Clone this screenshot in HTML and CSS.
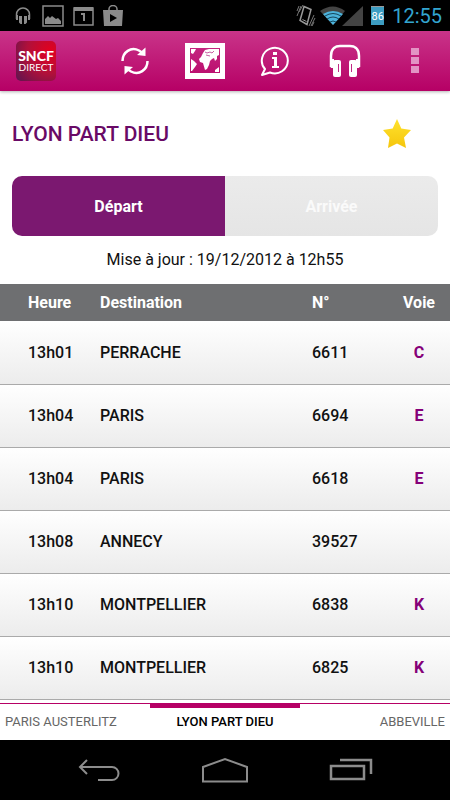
FILE: index.html
```
<!DOCTYPE html>
<html lang="fr">

<head>
    <meta charset="UTF-8">
    <meta name="viewport" content="width=device-width, initial-scale=1.0">
    <title>SNCF Direct - Lyon Part Dieu</title>
    <link rel="stylesheet" href="styles.css">
</head>

<body>
    <!-- Barre d'état -->
    <div class="status-bar">
        <div class="status-group">
            <svg class="status-headphones" width="16" height="18" viewBox="0 0 16 18">
                <path d="M1.500 12V7.500a6.500 6.500 0 0 1 13 0V12" fill="none" stroke="#8b8b8b" stroke-width="1.500"/>
                <path d="M1 8h2v5H1zM13 8h2v5h-2zM4 9h3v8H5.500L4 15.500zM9 9h3v6.500L10.500 17H9z" fill="#8b8b8b"/>
            </svg>
            <svg width="22" height="22" viewBox="0 0 22 22">
                <path d="M1 1h20v20H1z" fill="none" stroke="#8b8b8b" stroke-width="1.500"/>
                <path d="M3 19v-5l3-3 2 2 2-2 4 3 2-1 3 3v3z" fill="#8b8b8b"/>
            </svg>
            <svg width="21" height="20" viewBox="0 0 21 20">
                <path d="M1 2h19v17H1z" fill="none" stroke="#8b8b8b" stroke-width="1.500"/>
                <path d="M1 1h19v4H1zM8 7h4v8h-2V9H8z" fill="#8b8b8b"/>
            </svg>
            <svg width="20" height="22" viewBox="0 0 20 22">
                <path d="M6 6V4a4 3.500 0 0 1 8 0v2" fill="none" stroke="#8b8b8b" stroke-width="1.500"/>
                <path d="M0 5h20l-1 16H1z" fill="#8b8b8b"/>
                <path d="M7 9v8l7-4z" fill="#000"/>
            </svg>
        </div>
        <div class="status-group status-right">
            <svg width="20" height="24" viewBox="0 0 20 24">
                <path d="M8 2.500l7 3-4 15-7-4z" fill="none" stroke="#999" stroke-width="1.500"/>
                <path d="M6.500 15.500l4 2" stroke="#999"/>
                <path d="M5 2L1 12M7 1L3 8M3 2L1 7M18 11l-5 11M19 14l-4 8M18 18l-2 4" fill="none" stroke="#777"/>
            </svg>
            <svg class="wifi" width="43" height="20" viewBox="0 0 43 20">
                <path d="M0 5q13-9 25 0L13 19z" fill="#444"/>
                <path d="M3 8q10-6 20 0L13 19z" fill="#4cb3dc"/>
                <path d="M5 10q8-5 16 0M7 13q6-4 12 0M10 16q3-2 6 0" fill="none" stroke="#15465b"/>
                <path d="M43 0v20H22z" fill="#434343"/>
            </svg>
            <span class="battery">86</span>
            <span class="clock">12:55</span>
        </div>
    </div>

    <!-- Barre d'actions -->
    <header class="action-bar">
        <div class="logo"><span class="logo-name">SNCF</span><span class="logo-sub">DIRECT</span></div>
        <button class="action-btn" aria-label="Actualiser">
            <svg width="30" height="32" viewBox="0 0 30 32">
                <path d="M2.500 16C2.500 7 11 1.500 19 5.500l3 2M27.500 16c0 9-8.500 14.500-16.500 10.500l-3-2" fill="none" stroke="#fff" stroke-width="2.500"/>
                <path d="M25.500 2.500v8.500l-8.500-1zM4.500 29.500V21l8.500 1z" fill="#fff"/>
            </svg>
        </button>
        <button class="action-btn" aria-label="Carte">
            <svg width="40" height="36" viewBox="0 0 40 36">
                <path fill="#fff" fill-rule="evenodd" d="M0 0h40v36H0zM5 5v25h30V5z"/>
                <path fill="#fff" d="M6 6h5l-1 2-2 3-2-1zM6 16l3 2 3 3-2 3-3 4H6zM16 14l2-4 2-3 4-1h10v6l-2 1v3l-2 2-1-3-2 1-2 2-1 4-2 4-2 1-2-7-3-1-1-3zM30 27l4-3v5h-4z"/>
                <path d="M20 9l2 1 3-1 2 1 2-2M21 12l4 1" fill="none" stroke="#c660a2"/>
            </svg>
        </button>
        <button class="action-btn" aria-label="Informations">
            <svg width="30" height="32" viewBox="0 0 30 32">
                <path d="M5 24A13 12.800 0 1 1 10 27.500L2 30Z" fill="none" stroke="#fff" stroke-width="2" stroke-linejoin="round"/>
                <path d="M13 7h4v3h-4zM12 12h5v9h2v2h-7v-2h2v-7h-2z" fill="#fff"/>
            </svg>
        </button>
        <button class="action-btn" aria-label="Écouter">
            <svg width="34" height="34" viewBox="0 0 34 34">
                <path d="M3 23V12C3 4 8 2 12 2h10c4 0 9 2 9 10v11" fill="none" stroke="#fff" stroke-width="2.500"/>
                <rect x="5" y="16" width="8" height="17" rx="2" fill="#fff"/>
                <rect x="21" y="16" width="8" height="17" rx="2" fill="#fff"/>
                <path d="M2 15h4v9H3l-1-2zM28 15h4v7l-1 2h-3z" fill="#fff"/>
                <path d="M10.500 20v8M23.500 20v8" stroke="#c02884"/>
            </svg>
        </button>
        <button class="action-btn" aria-label="Menu">
            <svg width="8" height="26" viewBox="0 0 8 26">
                <path d="M0 0h8v7H0zM0 9h8v7H0zM0 18h8v7H0z" fill="#e294c4"/>
            </svg>
        </button>
    </header>

    <main class="content">
        <div class="station">
            <h1>LYON PART DIEU</h1>
            <button class="favorite" aria-label="Favori">
                <svg width="28" height="29" viewBox="0 0 28 29">
                    <defs>
                        <linearGradient id="gold" x1="0" y1="0" x2="0" y2="1">
                            <stop offset="0" stop-color="#ffe22e"/>
                            <stop offset="1" stop-color="#f5c60c"/>
                        </linearGradient>
                    </defs>
                    <path d="M14 0l4.300 9.500L28 11l-7 7.500L23 29l-9-4.500L5 29l1.500-10.500L0 11l9.700-1.500z" fill="url(#gold)"/>
                </svg>
            </button>
        </div>

        <div class="switch">
            <button class="switch-btn active">Départ</button>
            <button class="switch-btn">Arrivée</button>
        </div>

        <p class="updated">Mise à jour : 19/12/2012 à 12h55</p>

        <table class="board">
            <thead>
                <tr>
                    <th class="time">Heure</th>
                    <th>Destination</th>
                    <th class="number">N°</th>
                    <th class="track">Voie</th>
                </tr>
            </thead>
            <tbody>
                <tr>
                    <td class="time">13h01</td>
                    <td>PERRACHE</td>
                    <td>6611</td>
                    <td class="track">C</td>
                </tr>
                <tr>
                    <td class="time">13h04</td>
                    <td>PARIS</td>
                    <td>6694</td>
                    <td class="track">E</td>
                </tr>
                <tr>
                    <td class="time">13h04</td>
                    <td>PARIS</td>
                    <td>6618</td>
                    <td class="track">E</td>
                </tr>
                <tr>
                    <td class="time">13h08</td>
                    <td>ANNECY</td>
                    <td>39527</td>
                    <td class="track"></td>
                </tr>
                <tr>
                    <td class="time">13h10</td>
                    <td>MONTPELLIER</td>
                    <td>6838</td>
                    <td class="track">K</td>
                </tr>
                <tr>
                    <td class="time">13h10</td>
                    <td>MONTPELLIER</td>
                    <td>6825</td>
                    <td class="track">K</td>
                </tr>
            </tbody>
        </table>
    </main>

    <!-- Gares favorites -->
    <nav class="pager">
        <a href="#">PARIS AUSTERLITZ</a>
        <a href="#" class="current">LYON PART DIEU</a>
        <a href="#">ABBEVILLE</a>
    </nav>

    <!-- Boutons système -->
    <div class="system-bar">
        <button aria-label="Retour">
            <svg width="42" height="24" viewBox="0 0 42 24">
                <path d="M9 2L2 9l7 7M2 9h32a6.500 6.500 0 0 1 0 13H20" fill="none" stroke="#8c8c8c" stroke-width="2"/>
            </svg>
        </button>
        <button aria-label="Accueil">
            <svg width="46" height="26" viewBox="0 0 46 26">
                <path d="M1 24.500V10l22-8 22 8v14.500z" fill="none" stroke="#8c8c8c" stroke-width="2"/>
            </svg>
        </button>
        <button aria-label="Applications récentes">
            <svg width="44" height="24" viewBox="0 0 44 24">
                <path d="M2 8h33v13H2zM11 2h31v14" fill="none" stroke="#8c8c8c" stroke-width="2.500"/>
            </svg>
        </button>
    </div>
</body>

</html>
```
FILE: styles.css
```
:root {
    --purple: #7b1870;
    --pink: #b60065;
    --gray: #6e6f71;
}

* {
    box-sizing: border-box;
    margin: 0;
    padding: 0;
}

body {
    font-family: Roboto, "Liberation Sans", sans-serif;
    font-size: 16px;
    color: #111;
    background-color: #fff;
    min-height: 100vh;
    display: flex;
    flex-direction: column;
}

button {
    border: none;
    background: none;
    font: inherit;
    cursor: pointer;
}

svg {
    display: block;
}

/* Barre d'état */
.status-bar {
    display: flex;
    justify-content: space-between;
    align-items: center;
    height: 31px;
    padding: 0 8px 0 15px;
    background-color: #000;
}

.status-group {
    display: flex;
    align-items: center;
    gap: 9px;
}

.status-headphones {
    margin-right: 2px;
}

.status-right {
    gap: 8px;
}

.wifi {
    margin-left: -4px;
}

.battery {
    width: 13px;
    height: 19px;
    border-top: 1px solid #999;
    background-color: #3d9dc2;
    color: #fff;
    font-size: 11px;
    line-height: 19px;
    text-align: center;
}

.clock {
    color: #33a5d0;
    font-size: 20px;
    line-height: 30px;
}

/* Barre d'actions */
.action-bar {
    display: flex;
    align-items: center;
    height: 60px;
    padding-left: 16px;
    background: linear-gradient(#c93489, var(--pink));
    box-shadow: 0 1px 3px rgba(0, 0, 0, 0.3);
}

.logo {
    display: flex;
    flex-direction: column;
    align-items: center;
    justify-content: center;
    width: 40px;
    height: 40px;
    margin-right: auto;
    border-radius: 5px;
    background: radial-gradient(circle at 85% 25%, #e3001f, #b1103a 50%, #5a1550);
    color: #fff;
    font-family: Lato, sans-serif;
}

.logo-name {
    font-size: 14px;
    font-weight: 900;
    line-height: 13px;
}

.logo-sub {
    font-size: 10px;
    line-height: 11px;
}

.action-btn {
    display: flex;
    align-items: center;
    justify-content: center;
    width: 70px;
    height: 60px;
}

/* Gare */
.content {
    flex-grow: 1;
}

.station {
    display: flex;
    align-items: center;
    justify-content: space-between;
    height: 85px;
    padding: 0 39px 0 12px;
}

.station h1 {
    color: #690a66;
    font-size: 21px;
    font-weight: 500;
}

.switch {
    display: flex;
    height: 60px;
    margin: 0 12px;
    border-radius: 10px;
    overflow: hidden;
}

.switch-btn {
    flex: 1;
    background: linear-gradient(#ebebeb, #e5e5e5);
    color: #fafafa;
    font-weight: bold;
}

.switch-btn.active {
    background: var(--purple);
    color: #fff;
}

.updated {
    line-height: 48px;
    text-align: center;
}

/* Tableau des départs */
.board {
    width: 100%;
    border-collapse: collapse;
    table-layout: fixed;
    text-align: left;
}

.board th {
    height: 37px;
    background-color: var(--gray);
    color: #fff;
    font-weight: bold;
}

.board td {
    height: 63px;
    border-bottom: 1px solid #aaa;
    font-weight: 500;
}

.board tbody tr {
    background: linear-gradient(#fff, #ececec);
}

.board .time {
    width: 100px;
    padding-left: 28px;
}

.board .number {
    width: 76px;
}

.board .track {
    width: 62px;
    text-align: center;
}

.board td.track {
    color: #850078;
    font-weight: bold;
}

/* Gares favorites */
.pager {
    display: grid;
    grid-template-columns: 1fr 1fr 1fr;
    height: 37px;
    border-top: 1px solid var(--pink);
    font-size: 13px;
}

.pager a {
    padding: 0 5px;
    border-top: 4px solid transparent;
    color: #666;
    line-height: 28px;
    text-decoration: none;
    white-space: nowrap;
}

.pager .current {
    border-color: var(--pink);
    color: #000;
    font-weight: 500;
    text-align: center;
}

.pager a:last-child {
    text-align: right;
}

/* Boutons système */
.system-bar {
    display: flex;
    justify-content: center;
    height: 60px;
    background-color: #000;
}

.system-bar button {
    display: flex;
    align-items: center;
    justify-content: center;
    width: 126px;
    height: 60px;
}
```
